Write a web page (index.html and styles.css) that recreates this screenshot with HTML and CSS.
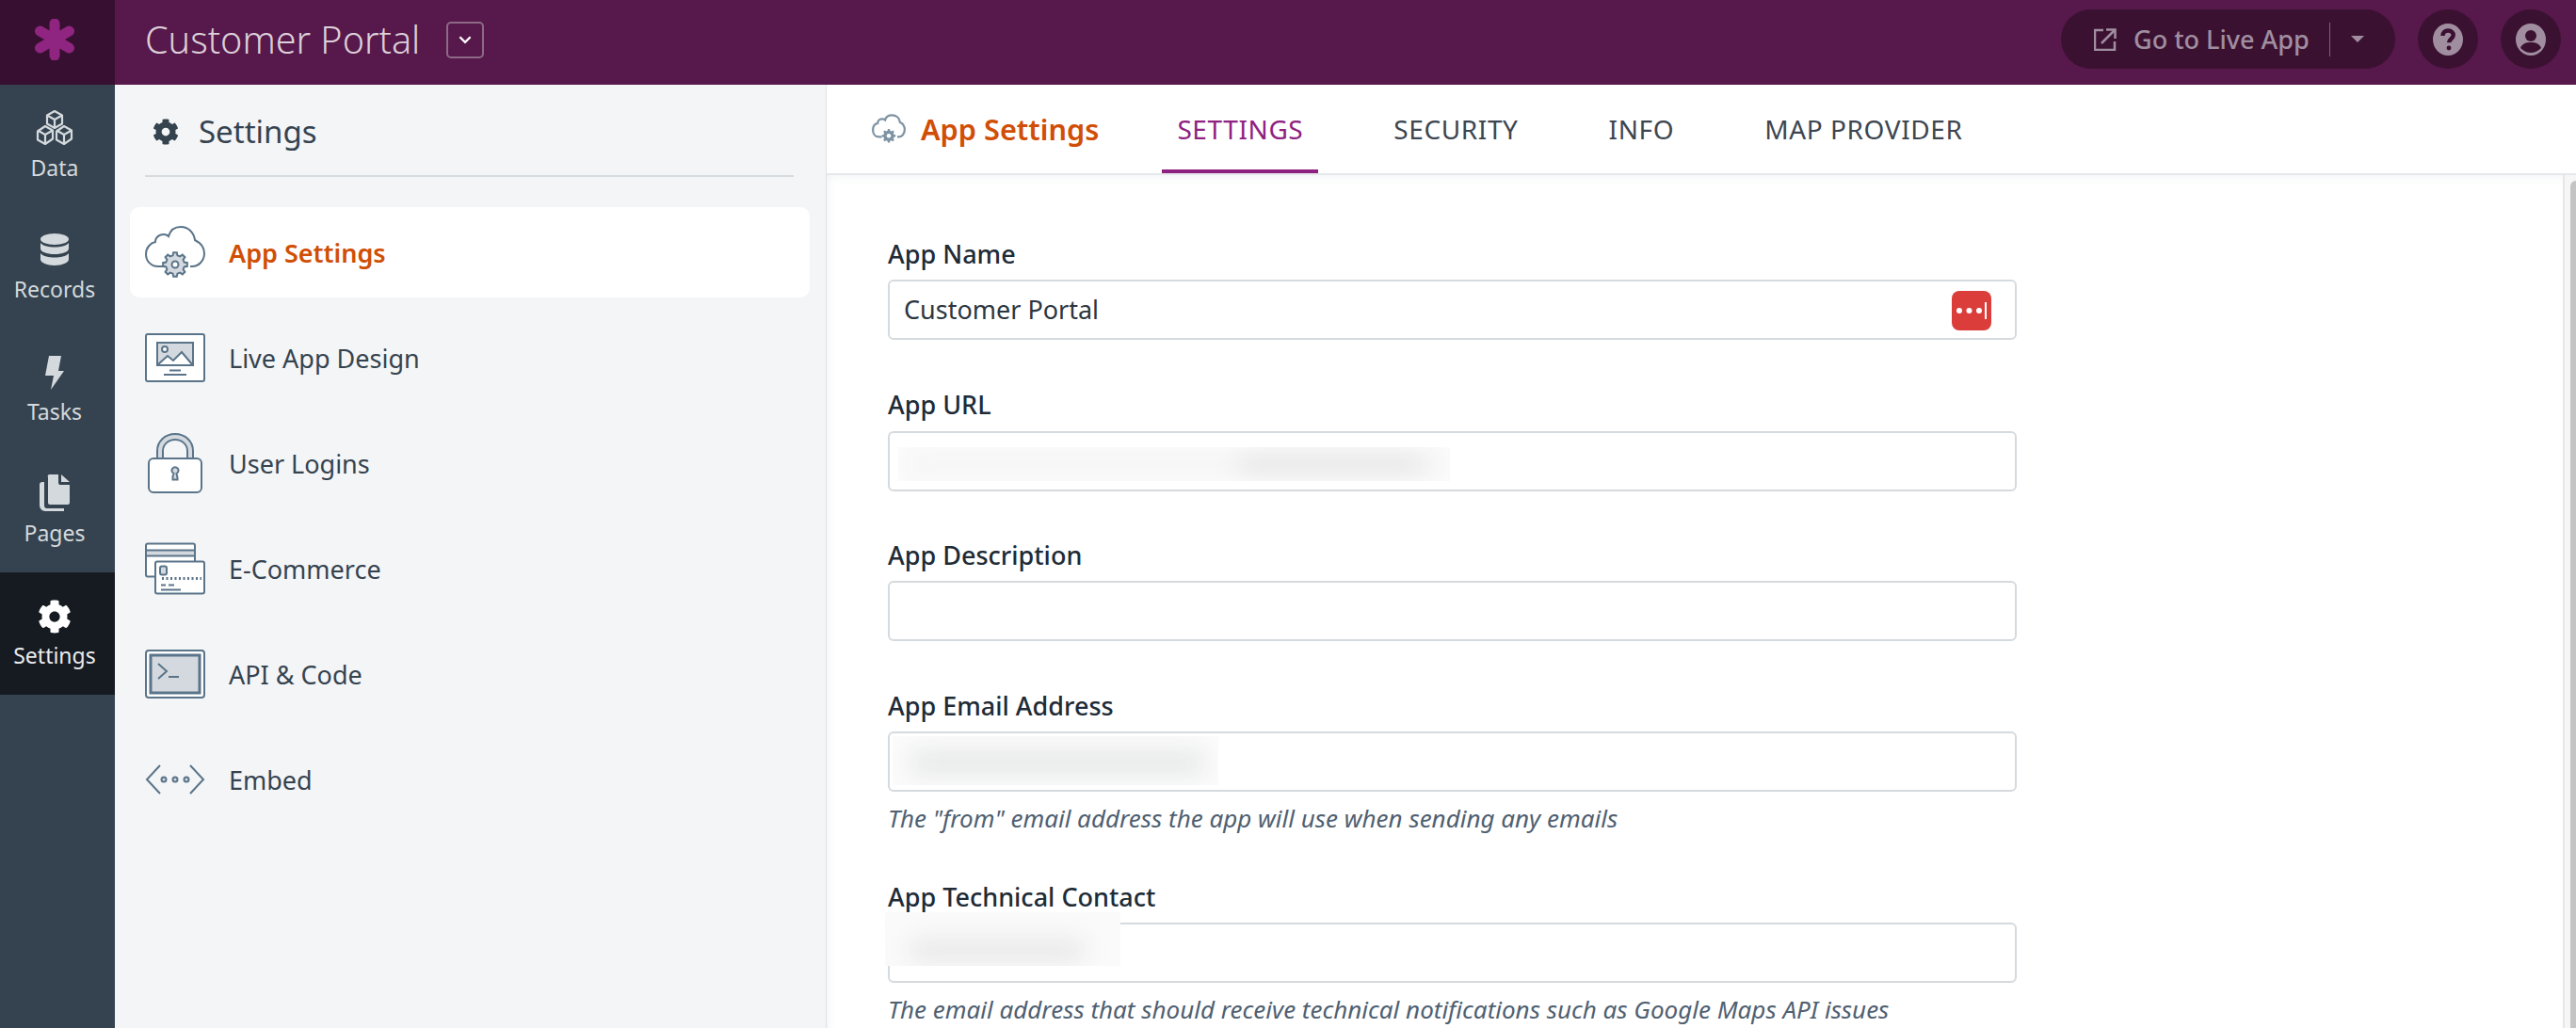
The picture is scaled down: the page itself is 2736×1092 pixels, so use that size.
FILE: index.html
```html
<!DOCTYPE html>
<html lang="en">
<head>
<meta charset="utf-8">
<title>Customer Portal - App Settings</title>
<link rel="stylesheet" href="styles.css">
</head>
<body>
<svg class="defs" width="0" height="0" aria-hidden="true">
  <defs>
    <symbol id="cog" viewBox="0 0 512 512"><path d="M487.4 315.7l-42.6-24.6c4.3-23.2 4.3-47 0-70.2l42.6-24.6c4.9-2.8 7.1-8.6 5.5-14-11.1-35.6-30-67.8-54.7-94.6-3.8-4.1-10-5.1-14.8-2.3L380.8 110c-17.9-15.4-38.5-27.3-60.8-35.1V25.8c0-5.6-3.9-10.5-9.4-11.7-36.7-8.2-74.3-7.8-109.2 0-5.5 1.2-9.4 6.1-9.4 11.7V75c-22.2 7.9-42.8 19.8-60.8 35.1L88.7 85.5c-4.9-2.8-11-1.9-14.8 2.3-24.7 26.7-43.6 58.9-54.7 94.6-1.7 5.4.6 11.2 5.5 14L67.3 221c-4.3 23.2-4.3 47 0 70.2l-42.6 24.6c-4.9 2.8-7.1 8.6-5.5 14 11.1 35.6 30 67.8 54.7 94.6 3.8 4.1 10 5.1 14.8 2.3l42.6-24.6c17.9 15.4 38.5 27.3 60.8 35.1v49.2c0 5.6 3.9 10.5 9.4 11.7 36.7 8.2 74.3 7.8 109.2 0 5.5-1.2 9.4-6.1 9.4-11.7v-49.2c22.2-7.9 42.8-19.8 60.8-35.1l42.6 24.6c4.9 2.8 11 1.9 14.8-2.3 24.7-26.7 43.6-58.9 54.7-94.6 1.5-5.5-.7-11.3-5.6-14.1zM256 336c-44.1 0-80-35.9-80-80s35.9-80 80-80 80 35.9 80 80-35.9 80-80 80z"/></symbol>
    <polygon id="cog8" points="-2.42,-9.7 -1.81,-12.87 1.81,-12.87 2.42,-9.7 5.15,-8.57 7.82,-10.38 10.38,-7.82 8.57,-5.15 9.7,-2.42 12.87,-1.81 12.87,1.81 9.7,2.42 8.57,5.15 10.38,7.82 7.82,10.38 5.15,8.57 2.42,9.7 1.81,12.87 -1.81,12.87 -2.42,9.7 -5.15,8.57 -7.82,10.38 -10.38,7.82 -8.57,5.15 -9.7,2.42 -12.87,1.81 -12.87,-1.81 -9.7,-2.42 -8.57,-5.15 -10.38,-7.82 -7.82,-10.38 -5.15,-8.57"/>
  </defs>
</svg>
<div class="app">
  <header class="topbar">
    <div class="logo">
      <svg class="logo-mark" viewBox="0 0 44 44"><g class="logo-petals"><path d="M22 5v34"/><path d="M6.500 13l31 18"/><path d="M37.500 13l-31 18"/></g></svg>
    </div>
    <div class="app-title">Customer Portal</div>
    <button class="title-caret" type="button"><svg viewBox="0 0 16 16"><path d="M3 5.500l5 5 5-5"/></svg></button>
    <div class="top-actions">
      <div class="live-pill">
        <svg class="ext-icon" viewBox="0 0 24 24"><path d="M10 2H1v21h21v-9"/><path d="M8 16L22 2"/><path d="M13 1.500h9.500V11"/></svg>
        <span class="live-text">Go to Live App</span>
        <span class="live-sep"></span>
        <span class="live-caret"></span>
      </div>
      <div class="round-btn">
        <svg viewBox="0 0 32 34"><ellipse cx="16" cy="17" rx="16" ry="17" class="glyph-bg"/><path class="glyph-q" d="M10.500 13c0-3.500 2.500-5.500 5.700-5.500 3.200 0 5.500 2 5.500 4.800 0 3.900-4.600 3.900-4.600 8"/><circle class="glyph-dot" cx="17" cy="26" r="2.400"/></svg>
      </div>
      <div class="round-btn">
        <svg viewBox="0 0 32 34"><ellipse cx="16" cy="17" rx="16" ry="17" class="glyph-bg"/><circle class="glyph-dot" cx="16" cy="13" r="6"/><path class="glyph-dot" d="M5 26c2-5 6-6 11-6s9 1 11 6c-3 3-7 5-11 5s-8-2-11-5z"/></svg>
      </div>
    </div>
  </header>

  <div class="body">
    <nav class="rail">
      <a class="rail-item">
        <svg class="rail-icon" viewBox="0 0 40 38"><g class="cube-set"><path class="cube-top" d="M20 1l8 4.500v9l-8 4.500-8-4.500v-9z"/><path d="M12 5.500l8 4.500 8-4.500M20 10v9"/><path class="cube-top" d="M10 17l8 4.500v9L10 36l-8-4.500v-9z"/><path d="M2 21.500l8 4.500 8-4.500M10 26v10"/><path class="cube-top" d="M30 17l8 4.500v9L30 36l-8-4.500v-9z"/><path d="M22 21.500l8 4.500 8-4.500M30 26v10"/></g></svg>
        <span>Data</span>
      </a>
      <a class="rail-item">
        <svg class="rail-icon rail-db" viewBox="0 0 30 34"><ellipse cx="15" cy="6" rx="15" ry="6"/><path d="M0 10c3 3.500 9 4.500 15 4.500S27 13.500 30 10v6c0 3.500-6.700 6-15 6S0 19.500 0 16z"/><path d="M0 21c3 3.500 9 4.500 15 4.500S27 24.500 30 21v6.500c0 3.500-6.700 6.500-15 6.500S0 31 0 27.500z"/></svg>
        <span>Records</span>
      </a>
      <a class="rail-item">
        <svg class="rail-icon rail-bolt" viewBox="0 0 20 36"><path d="M4 0h13l-3 16h6L6 36l3-15H0z"/></svg>
        <span>Tasks</span>
      </a>
      <a class="rail-item">
        <svg class="rail-icon rail-pages" viewBox="0 0 32 39"><path d="M9 3a2 2 0 0 1 2-3h9v9a2 2 0 0 0 2 2h10v19a2 2 0 0 1-2 2H11a2 2 0 0 1-2-2z"/><path d="M23 0l9 8h-9z"/><path d="M5 8v25a3 3 0 0 0 3 3h18v3H6a6 6 0 0 1-6-6V11a3 3 0 0 1 3-3z"/></svg>
        <span>Pages</span>
      </a>
      <a class="rail-item rail-item-active">
        <svg class="rail-icon rail-cog"><use href="#cog"/></svg>
        <span>Settings</span>
      </a>
    </nav>

    <aside class="side">
      <div class="side-head">
        <svg class="side-cog"><use href="#cog"/></svg>
        <h2>Settings</h2>
      </div>
      <ul class="side-list">
        <li class="side-item side-item-active">
          <svg class="ill" viewBox="0 0 64 56"><path class="ln" d="M19 43H14C6 43 1 37 1 30 1 23 6 18 11 17 11 12 15 9 20 9 22 9 24 10 25 11 27 4 32 1 38 1 46 1 52 7 53 15 59 18 63 23 63 29 63 37 57 43 50 43H48"/><g transform="translate(32 41)"><use href="#cog8" class="ln-fill"/><circle r="3.500" class="ln-white"/></g></svg>
          <span>App Settings</span>
        </li>
        <li class="side-item">
          <svg class="ill" viewBox="0 0 64 52"><rect x="1" y="1" width="62" height="50" rx="2" class="ln-white"/><rect x="13" y="10" width="38" height="24" class="ln-fill"/><path class="ln-white-open" d="M14 33l10-9 6 5 9-9 11 13"/><circle cx="21" cy="17" r="3" class="ln-white"/><path class="ln" d="M26 39.500h12M20 44h24"/></svg>
          <span>Live App Design</span>
        </li>
        <li class="side-item">
          <svg class="ill" viewBox="0 0 64 64"><path class="ln-fill" d="M13 28V19C13 9 21 1 32 1s19 8 19 18v9h-6V19c0-7-6-12-13-12s-13 5-13 12v9z"/><rect x="4" y="27" width="56" height="36" rx="5" class="ln-white"/><path class="ln-fill" d="M29.500 46l1-3a3.500 3.500 0 1 1 3 0l1 4.500v2h-5z"/></svg>
          <span>User Logins</span>
        </li>
        <li class="side-item">
          <svg class="ill" viewBox="0 0 64 55"><rect x="1" y="1" width="52" height="35" rx="2" class="ln-white"/><rect x="1" y="8" width="52" height="6" class="ln-fill"/><rect x="11" y="20" width="52" height="34" rx="2" class="ln-white"/><rect x="16" y="25" width="7" height="9" rx="2" class="ln-fill"/><path class="ln-dots" d="M18 38h42"/><path class="ln" d="M17 45h5M25 45h6M17 50h21"/></svg>
          <span>E-Commerce</span>
        </li>
        <li class="side-item">
          <svg class="ill" viewBox="0 0 64 52"><rect x="1" y="1" width="62" height="50" rx="3" class="ln-white"/><rect x="6" y="6" width="52" height="40" class="ln-fill ln-thick"/><path class="ln" d="M14 15l9 8-9 8M25 29h11"/></svg>
          <span>API &amp; Code</span>
        </li>
        <li class="side-item">
          <svg class="ill" viewBox="0 0 64 32"><path class="ln" d="M16 1L2 16l14 15M48 1l14 15-14 15"/><circle cx="20" cy="16" r="2.500" class="ln-fill"/><circle cx="32" cy="16" r="2.500" class="ln-fill"/><circle cx="44" cy="16" r="2.500" class="ln-fill"/></svg>
          <span>Embed</span>
        </li>
      </ul>
    </aside>

    <main class="main">
      <div class="tabs">
        <div class="tabs-title">
          <svg class="tabs-cloud" viewBox="0 0 64 56"><path class="ln-soft" d="M19 43H14C6 43 2 37 2 30 2 23 6 18 11 17 11 12 15 9 20 9 22 9 24 10 25 11 27 4 32 2 38 2 46 2 52 7 53 15 59 18 62 23 62 29 62 37 57 43 50 43H48"/><g transform="translate(32 41)"><use href="#cog8" class="cog-solid"/><circle r="4" class="cog-hole"/></g></svg>
          <span>App Settings</span>
        </div>
        <a class="tab tab-active">SETTINGS</a>
        <a class="tab">SECURITY</a>
        <a class="tab">INFO</a>
        <a class="tab">MAP PROVIDER</a>
      </div>
      <div class="content">
        <div class="form">
          <div class="field">
            <label>App Name</label>
            <div class="input">Customer Portal
              <svg class="lastpass" viewBox="0 0 42 42"><rect width="42" height="42" rx="8"/><circle cx="8" cy="21" r="3"/><circle cx="18.500" cy="21" r="3"/><circle cx="29" cy="21" r="3"/><rect x="35" y="12" width="2" height="18"/></svg>
            </div>
          </div>
          <div class="field field-url">
            <label>App URL</label>
            <div class="input"><div class="redact redact-url"><i></i></div></div>
          </div>
          <div class="field">
            <label>App Description</label>
            <div class="input"></div>
          </div>
          <div class="field">
            <label>App Email Address</label>
            <div class="input"><div class="redact redact-email"><i></i></div></div>
            <p class="hint">The "from" email address the app will use when sending any emails</p>
          </div>
          <div class="field">
            <label>App Technical Contact</label>
            <div class="input"><div class="redact redact-contact"><i></i></div></div>
            <p class="hint">The email address that should receive technical notifications such as Google Maps API issues</p>
          </div>
        </div>
      </div>
      <div class="scrollbar"><div class="thumb"></div></div>
    </main>
  </div>
</div>
</body>
</html>
```
FILE: styles.css
```css
* { box-sizing: border-box; }
html, body { margin: 0; height: 100%; overflow: hidden; }
body { font-family: "Noto Sans", "Liberation Sans", sans-serif; color: #35434f; background: #fff; }
.defs { position: absolute; }
.app { height: 1092px; display: flex; flex-direction: column; }

/* top bar */
.topbar { height: 90px; flex: none; display: flex; align-items: center; background: #57184b; }
.logo { width: 122px; height: 90px; flex: none; display: flex; align-items: center; justify-content: center; padding-right: 6px; padding-bottom: 6px; background: #370f30; }
.logo-mark { width: 44px; height: 44px; }
.logo-petals path { fill: none; stroke: #8f2580; stroke-width: 11; stroke-linecap: round; }
.app-title { margin-left: 32px; font-size: 39.500px; font-weight: 300; color: #dcd0d9; line-height: 84px; height: 90px; }
.title-caret { margin-left: 28px; margin-bottom: 6px; width: 40px; height: 39px; padding: 0; background: none; border: 2px solid #8d6a86; border-radius: 5px; display: flex; align-items: center; justify-content: center; }
.title-caret svg { width: 18px; height: 18px; }
.title-caret path { fill: none; stroke: #fff; stroke-width: 2; }
.top-actions { margin-left: auto; margin-right: 16px; margin-bottom: 7px; display: flex; gap: 24px; }
.live-pill { width: 355px; height: 63px; border-radius: 32px; background: #3b1132; display: flex; align-items: center; padding-left: 35px; }
.ext-icon { width: 24px; height: 24px; }
.ext-icon path { fill: none; stroke: #a08ea0; stroke-width: 2.500; }
.live-text { margin-left: 18px; font-size: 27px; font-weight: 500; color: #a08ea0; white-space: nowrap; line-height: 36px; margin-top: 1px; }
.live-sep { margin-left: 21px; width: 1px; height: 36px; background: #7b647a; }
.live-caret { margin-left: 22px; border-left: 7px solid transparent; border-right: 7px solid transparent; border-top: 7px solid #a08ea0; }
.round-btn { width: 64px; height: 63px; border-radius: 50%; background: #3b1132; display: flex; align-items: center; justify-content: center; }
.round-btn svg { width: 34px; height: 34px; }
.glyph-bg { fill: #a08ea0; }
.glyph-q { fill: none; stroke: #3b1132; stroke-width: 4.500; }
.glyph-dot { fill: #3b1132; }

.body { flex: 1; min-height: 0; display: flex; }

/* icon rail */
.rail { width: 122px; flex: none; background: #34434f; display: flex; flex-direction: column; }
.rail-item { height: 129.500px; flex: none; display: flex; flex-direction: column; align-items: center; justify-content: flex-end; padding: 0 6px 25px 0; color: #d4d9dd; font-size: 23px; line-height: 34px; }
.rail-item-active { background: #161a21; color: #e9ecee; }
.rail-icon { height: 38px; width: 40px; margin-bottom: 6px; fill: #d4d9dd; }
.cube-set path { fill: none; stroke: #d4d9dd; stroke-width: 2.200; stroke-linejoin: round; }
.cube-set .cube-top { fill: #34434f; }
.rail-db { width: 30px; height: 34px; margin-bottom: 8px; }
.rail-bolt { width: 20px; height: 36px; }
.rail-pages { width: 32px; height: 39px; }
.rail-cog { width: 36px; height: 36px; fill: #fff; }

/* settings sidebar */
.side { width: 756px; flex: none; background: #f4f5f7; border-right: 1px solid #dfe2e6; padding: 0 17px 0 16px; }
.side-head { height: 98px; margin: 0 17px 0 16px; display: flex; align-items: center; gap: 21px; padding: 3px 0 0 8px; border-bottom: 2px solid #d6dbdf; }
.side-cog { width: 28px; height: 28px; fill: #35434f; }
.side-head h2 { margin: 0; font-size: 33px; font-weight: 400; color: #35434f; }
.side-list { list-style: none; margin: 0; padding: 32px 0 0; }
.side-item { height: 96px; margin-bottom: 16px; padding-left: 16px; display: flex; align-items: center; gap: 25px; font-size: 27px; color: #35434f; border-radius: 10px; }
.side-item-active { background: #fff; color: #d04e05; font-weight: 600; }
.ill { width: 64px; height: 64px; flex: none; }
.ln { fill: none; stroke: #5a7489; stroke-width: 2; }
.ln-fill { fill: #d3d9de; stroke: #5a7489; stroke-width: 2; }
.ln-thick { stroke-width: 3; }
.ln-white { fill: #fff; stroke: #5a7489; stroke-width: 2; }
.ln-white-open { fill: #fff; stroke: #5a7489; stroke-width: 2; }
.ln-dots { fill: none; stroke: #5a7489; stroke-width: 3; stroke-dasharray: 2 2.500; }

/* main panel */
.main { flex: 1; min-width: 0; position: relative; display: flex; flex-direction: column; }
.tabs { height: 96px; flex: none; display: flex; align-items: stretch; border-bottom: 2px solid #e6e9ec; padding-left: 48px; background: #fff; }
.tabs-title { display: flex; align-items: center; gap: 16px; font-size: 30.700px; font-weight: 600; color: #d04e05; margin-right: 67px; }
.tabs-cloud { width: 36px; height: 32px; }
.ln-soft { fill: none; stroke: #7e93a4; stroke-width: 4; }
.cog-solid { fill: #7e93a4; }
.cog-hole { fill: #fff; }
.tab { height: 94px; padding: 3px 16px 0; margin-right: 64px; display: flex; align-items: center; font-size: 28px; letter-spacing: .6px; color: #3d4650; border-bottom: 4px solid transparent; }
.tab-active { color: #8f2180; border-bottom-color: #8f2180; }
.content { flex: 1; min-height: 0; overflow: hidden; padding: 66px 0 0 65px; box-shadow: inset 10px 10px 12px -10px #eef0f2; margin-right: 14px; }
.form { width: 1199px; }
.field { margin-bottom: 51px; }
.field-url { margin-bottom: 50px; }
.field-url label { margin-bottom: 10px; }
.field label { display: block; height: 36px; line-height: 36px; font-size: 27px; font-weight: 500; color: #212b36; }
.field:not(.field-url) label { margin-bottom: 9px; }
.input { position: relative; height: 64px; border: 2px solid #d5dade; border-radius: 6px; padding-left: 15px; line-height: 60px; font-size: 27px; color: #2c3640; background: #fff; }
.lastpass { position: absolute; right: 25px; top: 10px; width: 42px; height: 42px; fill: #fff; }
.lastpass > rect:first-child { fill: #db3e3a; }
.hint { margin: 13px 0 0; line-height: 30px; height: 30px; font-size: 26px; font-style: italic; color: #4f6071; white-space: nowrap; }

/* redacted values */
.redact { position: absolute; overflow: hidden; background: #fbfbfb; }
.redact i { position: absolute; display: block; filter: blur(12px); }
.redact-url { left: 9px; top: 15px; width: 586px; height: 36px; }
.redact-url i { left: 14px; right: 14px; top: 10px; bottom: 10px; background: linear-gradient(90deg, #f3f3f3 0 60%, #dedede 65% 95%, #f3f3f3 100%); }
.redact-email { left: 3px; top: 3px; width: 346px; height: 52px; }
.redact-email i { left: 20px; right: 16px; top: 16px; bottom: 12px; background: #e6e7e7; }
.redact-contact { left: -5px; top: -13px; width: 250px; height: 57px; background: #fafafa; }
.redact-contact i { left: 28px; right: 40px; top: 30px; bottom: 6px; background: #e6e6e6; }

.scrollbar { position: absolute; right: 0; top: 96px; bottom: 0; width: 14px; background: #f6f6f6; border-left: 2px solid #e6e6e6; }
.thumb { position: absolute; left: 6px; right: 0; top: 6px; bottom: 0; background: #c4c4c4; border-radius: 6px 0 0 0; }
```
